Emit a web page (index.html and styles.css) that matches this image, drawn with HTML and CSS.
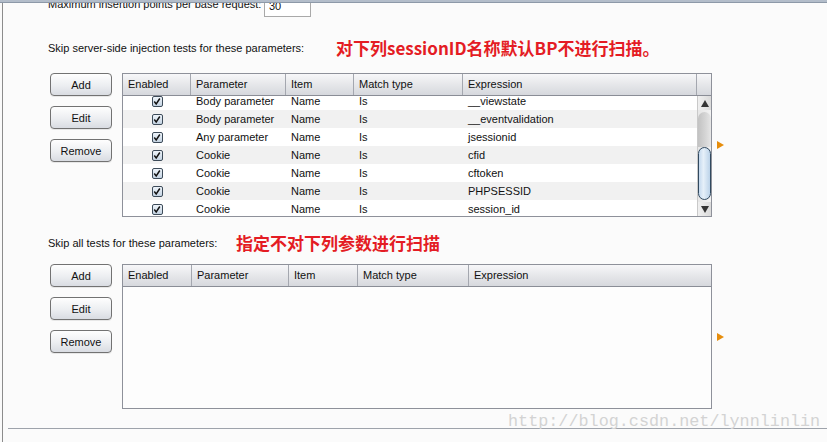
FILE: index.html
```html
<!DOCTYPE html>
<html>
<head>
<meta charset="utf-8">
<link rel="stylesheet" href="styles.css">
</head>
<body>
<div class="topbar"></div>
<div class="panel">
  <div class="maxrow">
    <span class="maxlabel">Maximum insertion points per base request:</span>
    <span class="numbox">30</span>
  </div>

  <div class="section-label">
    <span class="label label1">Skip server-side injection tests for these parameters:</span>
    <span class="note">对下列sessionID名称默认BP不进行扫描。</span>
  </div>

  <div class="block">
    <div class="buttons">
      <button class="btn">Add</button>
      <button class="btn">Edit</button>
      <button class="btn">Remove</button>
    </div>
    <div class="table t1">
      <div class="thead cols1">
        <div class="th">Enabled</div>
        <div class="th">Parameter</div>
        <div class="th">Item</div>
        <div class="th">Match type</div>
        <div class="th">Expression</div>
        <div class="th last"></div>
      </div>
      <div class="tbody">
        <div class="rows">
          <div class="rows-inner">
            <div class="row cols1r"><div class="cb"><svg width="11" height="11" viewBox="0 0 11 11"><path d="M2.5 5.5 L4.6 8.2 L8.6 2.2" fill="none" stroke="#111" stroke-width="1.6"/></svg></div><div class="td">Body parameter</div><div class="td">Name</div><div class="td">Is</div><div class="td">__viewstate</div></div>
            <div class="row cols1r"><div class="cb"><svg width="11" height="11" viewBox="0 0 11 11"><path d="M2.5 5.5 L4.6 8.2 L8.6 2.2" fill="none" stroke="#111" stroke-width="1.6"/></svg></div><div class="td">Body parameter</div><div class="td">Name</div><div class="td">Is</div><div class="td">__eventvalidation</div></div>
            <div class="row cols1r"><div class="cb"><svg width="11" height="11" viewBox="0 0 11 11"><path d="M2.5 5.5 L4.6 8.2 L8.6 2.2" fill="none" stroke="#111" stroke-width="1.6"/></svg></div><div class="td">Any parameter</div><div class="td">Name</div><div class="td">Is</div><div class="td">jsessionid</div></div>
            <div class="row cols1r"><div class="cb"><svg width="11" height="11" viewBox="0 0 11 11"><path d="M2.5 5.5 L4.6 8.2 L8.6 2.2" fill="none" stroke="#111" stroke-width="1.6"/></svg></div><div class="td">Cookie</div><div class="td">Name</div><div class="td">Is</div><div class="td">cfid</div></div>
            <div class="row cols1r"><div class="cb"><svg width="11" height="11" viewBox="0 0 11 11"><path d="M2.5 5.5 L4.6 8.2 L8.6 2.2" fill="none" stroke="#111" stroke-width="1.6"/></svg></div><div class="td">Cookie</div><div class="td">Name</div><div class="td">Is</div><div class="td">cftoken</div></div>
            <div class="row cols1r"><div class="cb"><svg width="11" height="11" viewBox="0 0 11 11"><path d="M2.5 5.5 L4.6 8.2 L8.6 2.2" fill="none" stroke="#111" stroke-width="1.6"/></svg></div><div class="td">Cookie</div><div class="td">Name</div><div class="td">Is</div><div class="td">PHPSESSID</div></div>
            <div class="row cols1r"><div class="cb"><svg width="11" height="11" viewBox="0 0 11 11"><path d="M2.5 5.5 L4.6 8.2 L8.6 2.2" fill="none" stroke="#111" stroke-width="1.6"/></svg></div><div class="td">Cookie</div><div class="td">Name</div><div class="td">Is</div><div class="td">session_id</div></div>
          </div>
        </div>
        <div class="scrollbar">
          <div class="sb-btn"><span class="tri-up"></span></div>
          <div class="sb-track">
            <div class="sb-shade"></div>
            <div class="sb-thumb"></div>
          </div>
          <div class="sb-btn"><span class="tri-down"></span></div>
        </div>
      </div>
    </div>
    <div class="arrow"></div>
  </div>

  <div class="section-label label-row2">
    <span class="label label2">Skip all tests for these parameters:</span>
    <span class="note">指定不对下列参数进行扫描</span>
  </div>

  <div class="block block2">
    <div class="buttons">
      <button class="btn">Add</button>
      <button class="btn">Edit</button>
      <button class="btn">Remove</button>
    </div>
    <div class="table t2">
      <div class="thead cols2">
        <div class="th">Enabled</div>
        <div class="th">Parameter</div>
        <div class="th">Item</div>
        <div class="th">Match type</div>
        <div class="th last">Expression</div>
      </div>
      <div class="tbody empty"></div>
    </div>
    <div class="arrow"></div>
  </div>

  <div class="rule"></div>
  <div class="watermark">http://blog.csdn.net/lynnlinlin</div>
</div>
</body>
</html>
```

FILE: styles.css
```css
* { box-sizing: border-box; }

body {
  margin: 0;
  width: 827px;
  height: 442px;
  overflow: hidden;
  background: #fafafa;
  font-family: "Liberation Sans", Arial, sans-serif;
  font-size: 11px;
  color: #111;
}

.topbar {
  height: 3px;
  background: #b3bdca;
  border-bottom: 1px solid #8d99a8;
}

.panel {
  position: relative;
  margin-left: 2px;
  height: 439px;
  border-left: 1px solid #8c8c8c;
  background: #fbfbfb;
  overflow: hidden;
}

.maxrow {
  display: flex;
  align-items: flex-start;
  height: 20px;
  margin-top: -6px;
  padding-left: 45px;
}

.maxlabel {
  width: 216px;
  line-height: 14px;
}

.numbox {
  width: 47px;
  height: 20px;
  border: 1px solid #a9a9a9;
  background: #fff;
  padding-left: 4px;
  line-height: 16px;
}

.section-label {
  display: flex;
  align-items: center;
  height: 20px;
  margin-top: 21px;
  padding-left: 45px;
}

.label1 { width: 288px; }
.label2 { width: 188px; }

.note {
  color: #e41c24;
  font-family: "Noto Sans CJK SC", sans-serif;
  font-weight: bold;
  font-size: 17px;
  line-height: 20px;
}

.block {
  display: flex;
  align-items: flex-start;
  margin-top: 15px;
  padding-left: 47px;
}

.label-row2 { margin-top: 16px; }
.block2 { margin-top: 11px; }

.buttons {
  display: flex;
  flex-direction: column;
  gap: 10px;
  width: 62px;
  margin-right: 10px;
}

.btn {
  width: 62px;
  height: 23px;
  padding: 0;
  border: 1px solid #727272;
  border-radius: 4px;
  background: linear-gradient(#fefefe, #eceef1 55%, #d9dce2);
  box-shadow: 0 1px 0 rgba(0,0,0,0.08);
  font-family: "Liberation Sans", Arial, sans-serif;
  font-size: 11px;
  color: #111;
}

.table {
  width: 590px;
  border: 1px solid #8e919a;
  background: #fff;
}

.t1 { height: 144px; }
.t2 { height: 145px; background: #fdfdfd; }

.thead {
  display: grid;
  height: 22px;
  border-bottom: 1px solid #8a8d96;
  background: linear-gradient(#f7f7f9, #e6e7ea 50%, #d6d8dd);
}

.cols1 { grid-template-columns: 68px 95px 68px 109px 234px 14px; }
.cols2 { grid-template-columns: 69px 97px 69px 111px 242px; }

.th {
  border-right: 1px solid #a4a7af;
  padding-left: 5px;
  line-height: 21px;
  white-space: nowrap;
}

.th.last { border-right: none; }

.tbody {
  display: flex;
  height: 120px;
}

.rows {
  width: 574px;
  height: 120px;
  overflow: hidden;
}

.rows-inner { margin-top: -4px; }

.row {
  display: grid;
  height: 18px;
  align-items: center;
  background: #fff;
}

.row:nth-child(even) { background: #f1f1f1; }

.cols1r { grid-template-columns: 68px 95px 68px 109px 234px; }

.td {
  padding-left: 5px;
  white-space: nowrap;
}

.cb {
  justify-self: center;
  width: 11px;
  height: 11px;
  border: 1px solid #3d4b59;
  border-radius: 2px;
  background: linear-gradient(#eef4fa, #c4d3e2);
  display: flex;
}

.cb svg { margin: -1px 0 0 -1px; }

.scrollbar {
  width: 14px;
  display: flex;
  flex-direction: column;
  background: #e9e9e9;
  border-left: 1px solid #c9c9c9;
}

.sb-btn {
  height: 14px;
  display: flex;
  align-items: center;
  justify-content: center;
  background: linear-gradient(90deg, #f0f0f0, #dadada);
}

.tri-up {
  width: 0;
  height: 0;
  border-left: 4px solid transparent;
  border-right: 4px solid transparent;
  border-bottom: 7px solid #333;
}

.tri-down {
  width: 0;
  height: 0;
  border-left: 4px solid transparent;
  border-right: 4px solid transparent;
  border-top: 7px solid #333;
}

.sb-track {
  flex: 1;
  display: flex;
  flex-direction: column;
  background: linear-gradient(90deg, #e6e6e6, #f2f2f2);
}

.sb-shade {
  margin-top: 2px;
  height: 35px;
  border-radius: 7px 7px 0 0;
  background: linear-gradient(90deg, #c2c2c2, #d6d6d6 60%, #e6e6e6);
}

.sb-thumb {
  height: 53px;
  border: 1px solid #31495f;
  border-radius: 7px;
  background: linear-gradient(90deg, #c4d9ee, #e6f0f9 40%, #bcd3e9);
}

.tbody.empty {
  height: 121px;
  background: #fdfdfd;
}

.arrow {
  align-self: center;
  width: 0;
  height: 0;
  margin-left: 5px;
  border-left: 7px solid #e68d0c;
  border-top: 4px solid transparent;
  border-bottom: 4px solid transparent;
}

.rule {
  height: 1px;
  margin-top: 19px;
  margin-left: 5px;
  background: #9ea3ab;
}

.watermark {
  position: absolute;
  left: 505px;
  top: 409px;
  font-family: "Liberation Mono", "Courier New", monospace;
  font-size: 16.8px;
  line-height: 20px;
  color: #d3d3d3;
  white-space: nowrap;
}
```
